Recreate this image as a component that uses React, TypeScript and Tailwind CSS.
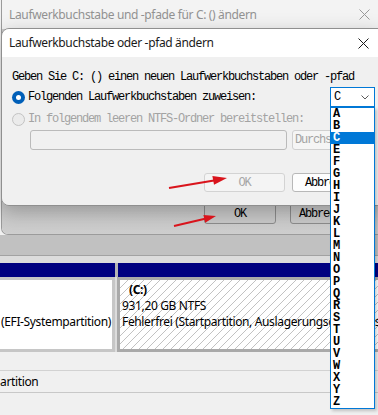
import React from "react";

const letters = ["A","B","C","E","F","G","H","I","J","K","L","M","N","O","P","Q","R","S","T","U","V","W","X","Y","Z"];

function CloseX({ color }: { color: string }) {
  return (
    <svg width="11" height="11" viewBox="0 0 11 11" className="shrink-0">
      <path d="M0.5 0.5 L10.5 10.5 M10.5 0.5 L0.5 10.5" stroke={color} strokeWidth="1" fill="none" />
    </svg>
  );
}

export default function App() {
  return (
    <div className="relative h-[415px] w-[378px] overflow-hidden bg-[#f0f0f0] font-['Noto_Sans',sans-serif] tracking-[-0.35px]">
      {/* Outer dialog */}
      <div className="ml-[1px] flex h-[235px] flex-col overflow-hidden rounded-bl-[7px] border-b border-l border-[#9b9b9b]">
        <div className="flex h-[29px] shrink-0 items-center justify-between bg-[#f3f3f3] pl-[7px] pr-[8px] text-[12px] text-[#929292]">
          <span>Laufwerkbuchstabe und -pfade für C: () ändern</span>
          <CloseX color="#9a9a9a" />
        </div>
        <div className="flex-1 bg-[linear-gradient(180deg,#c9c9c9,#c5c5c5_75%,#cecece)] pt-[174px] font-['Liberation_Mono',monospace] text-[12px] leading-[12px] tracking-[-1.2px]">
          <div className="flex">
            <div className="ml-[202px] flex h-[21px] w-[72px] items-center justify-center rounded-[3px] border border-[#8c8c8c] bg-[#c9c9c9] text-black">OK</div>
            <div className="ml-[14px] flex h-[21px] w-[72px] items-center justify-center rounded-[3px] border border-[#8c8c8c] bg-[#c9c9c9] text-black">Abbrechen</div>
          </div>
        </div>
      </div>

      {/* area below outer dialog */}
      <div className="h-[20px] bg-[#c1c1c1]" />
      <div className="h-[1px] bg-[#a2a2a2]" />
      <div className="h-[7px] bg-[#dcdcdc]" />
      <div className="flex h-[14px] bg-[#000080]">
        <div className="w-[115px]" />
        <div className="w-[3px] bg-[#b4b4b4]" />
      </div>
      <div className="flex h-[75px] bg-[#dcdcdc] text-[12px] leading-[16px] text-black">
        <div className="flex w-[115px] flex-col items-end overflow-hidden border-y-[3px] border-r-[3px] border-[#c6c6c6] bg-white pt-[2px] pr-[1px] whitespace-nowrap">
          <div className="h-[16px]" />
          <div className="h-[16px]" />
          <div className="h-[16px]">Fehlerfrei (EFI-Systempartition)</div>
        </div>
        <div className="ml-[2px] flex-1 overflow-hidden border-[3px] border-r-0 border-[#a9a9a9] bg-[repeating-linear-gradient(135deg,#ffffff_0px,#ffffff_4.96px,#c2c2c2_4.96px,#c2c2c2_5.66px)] pt-[2px] pl-[2px] whitespace-nowrap">
          <div className="ml-[7px] h-[16px] font-bold">(C:)</div>
          <div className="h-[16px]">931,20 GB NTFS</div>
          <div className="h-[16px]">Fehlerfrei (Startpartition, Auslagerungsdatei, Absturzabbild, Primäre Partition)</div>
        </div>
      </div>
      <div className="h-[18px] bg-[#f0f0f0]" />
      <div className="h-[1px] bg-[#d2d2d2]" />
      <div className="flex h-[21px] items-center bg-[#f0f0f0] text-[12px] text-black">artition</div>
      <div className="h-[1px] bg-[#c8c8c8]" />

      {/* Inner dialog */}
      <div className="absolute left-[1px] top-[28px] flex h-[178px] w-[380px] flex-col overflow-hidden rounded-l-[8px] border border-[#8f8f8f] shadow-[0_6px_20px_rgba(0,0,0,0.25)]">
        <div className="flex h-[28px] shrink-0 items-center bg-white pl-[7px] pr-[11px] text-[12px] text-[#1a1a1a]">
          <span>Laufwerkbuchstabe oder -pfad ändern</span>
          <div className="ml-auto">
            <CloseX color="#1a1a1a" />
          </div>
        </div>
        <div className="flex-1 bg-[#f0f0f0] pl-[10px] pt-[14px] font-['Liberation_Mono',monospace] text-[12px] leading-[12px] tracking-[-1.2px] text-black">
          <div className="h-[12px] whitespace-nowrap">Geben Sie C: () einen neuen Laufwerkbuchstaben oder -pfad</div>
          <div className="mt-[4px] flex h-[20px] w-[363px] items-center">
            <div className="flex h-[13px] w-[13px] items-center justify-center rounded-full bg-[#005fb8]">
              <div className="h-[5px] w-[5px] rounded-full bg-white" />
            </div>
            <span className="ml-[3px] whitespace-nowrap">Folgenden Laufwerkbuchstaben zuweisen:</span>
            <div className="ml-auto flex h-[20px] w-[45px] items-center border border-[#0078d7] bg-white pl-[3px]">
              <span>C</span>
              <svg width="8" height="5" viewBox="0 0 8 5" className="ml-auto mr-[5px]">
                <path d="M0.5 0.5 L4 4 L7.5 0.5" stroke="#5a5a5a" strokeWidth="1" fill="none" />
              </svg>
            </div>
          </div>
          <div className="mt-[5px] flex h-[14px] items-center text-[#a3a3a3]">
            <div className="h-[13px] w-[13px] rounded-full border border-[#c3c3c3] bg-[#ebebeb]" />
            <span className="ml-[3px] whitespace-nowrap">In folgendem leeren NTFS-Ordner bereitstellen:</span>
          </div>
          <div className="mt-[4px] flex">
            <div className="ml-[18px] h-[20px] w-[257px] rounded-[3px] border border-[#bababa] bg-[#f0f0f0]" />
            <div className="ml-[5px] flex h-[20px] w-[80px] items-center overflow-hidden rounded-[3px] border border-[#d0d0d0] bg-[#f5f5f5] pl-[2px] whitespace-nowrap text-[#a3a3a3]">Durchsuchen...</div>
          </div>
          <div className="mt-[23px] flex">
            <div className="ml-[192px] flex h-[19px] w-[81px] items-center justify-center rounded-[3px] border border-[#d3d3d3] bg-[#f4f4f4] text-[#a6a6a6]">OK</div>
            <div className="ml-[7px] flex h-[19px] w-[80px] items-center justify-center rounded-[3px] border border-[#b8b8b8] bg-[#fdfdfd] text-black">Abbrechen</div>
          </div>
        </div>
      </div>

      {/* Dropdown list */}
      <div className="absolute left-[330px] top-[107px] w-[45px] border border-[#0078d7] bg-white font-['Liberation_Mono',monospace] text-[12px] font-bold leading-[12px] tracking-normal text-black shadow-[2px_2px_3px_rgba(0,0,0,0.2)]">
        {letters.map((l) => (
          <div key={l} className={l === "C" ? "h-[12px] overflow-hidden bg-[#0078d7] pl-[2px] text-white" : "h-[12px] overflow-hidden pl-[2px]"}>
            {l}
          </div>
        ))}
      </div>

      {/* Red arrows */}
      <svg className="pointer-events-none absolute left-0 top-0" width="378" height="415" viewBox="0 0 378 415">
        <line x1="169" y1="188" x2="214" y2="180.5" stroke="#d9141c" strokeWidth="2" />
        <polygon points="227,178 212.4,176 214,184.8" fill="#d9141c" />
        <line x1="174" y1="226" x2="205" y2="218.8" stroke="#d9141c" strokeWidth="2" />
        <polygon points="216,216 203.4,214.9 205.2,222.7" fill="#d9141c" />
      </svg>
    </div>
  );
}
